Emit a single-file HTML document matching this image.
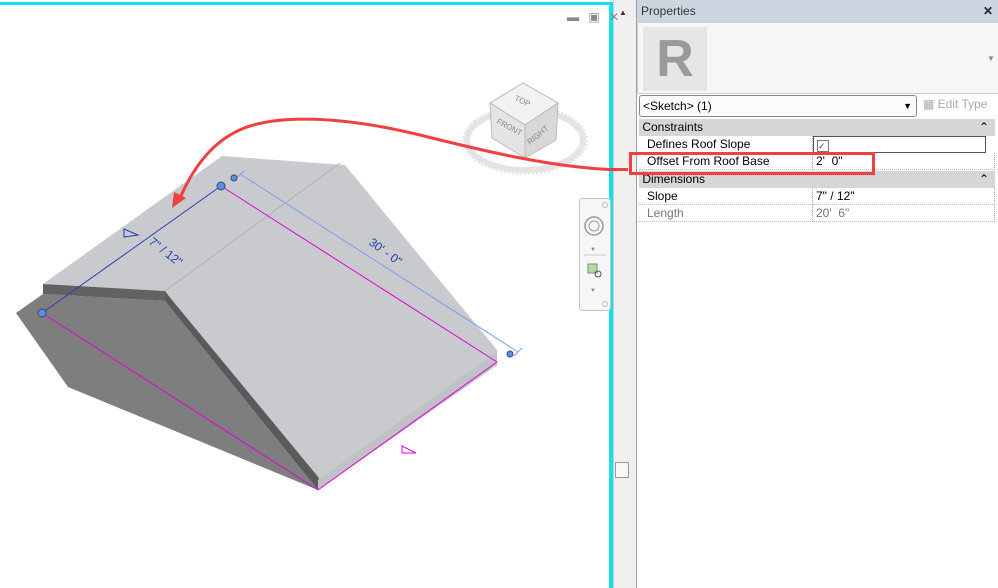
<!DOCTYPE html>
<html><head><meta charset="utf-8"><style>
body{margin:0;width:998px;height:588px;overflow:hidden;background:#fff;font-family:"Liberation Sans",sans-serif;position:relative}
.abs{position:absolute}
.panel{left:636px;top:0;width:362px;height:588px;background:#fff;border-left:1px solid #a0a0a0}
.title{left:0;top:0;width:362px;height:22px;background:#ccd6e1;font-size:12px;color:#333;line-height:22px;text-indent:4px}
.row{position:absolute;left:2px;width:356px;font-size:12px;color:#000;line-height:17px}
.hdr{background:#d6d6d6}
.cell{position:absolute;top:0;height:100%;border-right:1px dotted #aaa;border-bottom:1px dotted #bbb;box-sizing:border-box}
</style></head><body>
<div class="abs" style="left:0;top:2px;width:612px;height:3px;background:#12e0ee"></div>
<div class="abs" style="left:609px;top:2px;width:4px;height:586px;background:#12e0ee"></div>
<div class="abs" style="left:613px;top:0;width:22px;height:588px;background:#f0f0f0;border-left:1px solid #ccc"></div>
<div class="abs" style="left:619px;top:8px;font-size:8px;color:#333">▲</div>
<div class="abs" style="left:615px;top:462px;width:12px;height:14px;background:#f8f8f8;border:1px solid #999"></div>
<div class="abs" style="left:567px;top:10px;font-size:12px;color:#888;letter-spacing:3px">▬ ▣ ✕</div>

<svg class="abs" style="left:0;top:0" width="613" height="588">
 <polygon points="43,284 222,156 345,165 497,350 497,365 318,490 165,291" fill="#c8cacd"/>
 <line x1="165" y1="291" x2="340" y2="163" stroke="#a5a7aa" stroke-width="0.7"/>
 <polygon points="16,313 43,294 165,301 318,490 68,387" fill="#7e7e7e"/>
 <polygon points="43,284 165,291 165,301 43,294" fill="#626264"/>
 <polygon points="165,291 172,300 319,478 318,490 165,301" fill="#5a5a5c"/>
 <polygon points="318,480 497,352 497,365 318,490" fill="#bfc1c4"/>
 <line x1="42" y1="313" x2="318" y2="490" stroke="#e000e0" stroke-width="1"/>
 <line x1="221" y1="186" x2="497" y2="362" stroke="#e000e0" stroke-width="1"/>
 <line x1="318" y1="490" x2="497" y2="362" stroke="#e000e0" stroke-width="1"/>
 <line x1="42" y1="313" x2="221" y2="186" stroke="#1d3fb8" stroke-width="1"/>
 <line x1="240" y1="174" x2="518" y2="352" stroke="#7aa2ee" stroke-width="1"/>
 <line x1="236" y1="178" x2="244" y2="171" stroke="#7aa2ee"/>
 <line x1="514" y1="356" x2="522" y2="348" stroke="#7aa2ee"/>
 <circle cx="42" cy="313" r="4" fill="#5b8ee0" stroke="#3a4a70"/>
 <circle cx="221" cy="186" r="4" fill="#5b8ee0" stroke="#3a4a70"/>
 <circle cx="234" cy="178" r="3" fill="#5b8ee0" stroke="#3a4a70"/>
 <circle cx="510" cy="354" r="3" fill="#5b8ee0" stroke="#3a4a70"/>
 <polygon points="124,229 124,237 138,235" fill="none" stroke="#1d3fb8"/>
 <polygon points="402,446 402,453 416,453" fill="none" stroke="#e000e0"/>
 <text transform="translate(148,243) rotate(38)" font-size="12" fill="#1d3fb8">7" / 12"</text>
 <text transform="translate(368,244) rotate(36)" font-size="12" fill="#1d3fb8">30' - 0"</text>
 <ellipse cx="525" cy="140" rx="58" ry="30" fill="none" stroke="#e4e4e4" stroke-width="6"/>
 <ellipse cx="525" cy="140" rx="62" ry="34" fill="none" stroke="#d6d6d6" stroke-width="1" stroke-dasharray="2 2"/>
 <polygon points="490,103 523,83 558,103 525,125" fill="#f2f2f2" stroke="#bbb"/>
 <polygon points="490,103 525,125 525,158 492,138" fill="#e4e4e4" stroke="#bbb"/>
 <polygon points="525,125 558,103 556,140 525,158" fill="#d8d8d8" stroke="#bbb"/>
 <text transform="translate(514,100) rotate(25)" font-size="8" fill="#888">TOP</text>
 <text transform="translate(496,123) rotate(28)" font-size="8" fill="#888">FRONT</text>
 <text transform="translate(530,145) rotate(-40)" font-size="8" fill="#888">RIGHT</text>
 <rect x="579.5" y="198.5" width="31" height="112" rx="3" fill="#f6f6f6" stroke="#c4c4c4"/>
 <circle cx="605" cy="205" r="2.5" fill="none" stroke="#bbb"/>
 <circle cx="605" cy="304" r="2.5" fill="none" stroke="#bbb"/>
 <circle cx="594" cy="226" r="9" fill="none" stroke="#999" stroke-width="1.5"/>
 <circle cx="594" cy="226" r="5" fill="none" stroke="#999"/>
 <text x="590" y="251" font-size="6" fill="#888">▼</text>
 <line x1="584" y1="255" x2="606" y2="255" stroke="#ccc"/>
 <rect x="588" y="264" width="9" height="9" fill="#b8d8a8" stroke="#6a9a5a"/>
 <circle cx="598" cy="274" r="3" fill="none" stroke="#555"/>
 <text x="590" y="292" font-size="6" fill="#888">▼</text>
 <path d="M628,170 C560,170 480,150 420,135 C350,118 270,110 230,135 C205,150 190,175 180,198" fill="none" stroke="#f04040" stroke-width="3"/>
 <polygon points="172,208 174,192 186,198" fill="#f04040"/>
</svg>
<div class="abs" style="left:612px;top:168px;width:16px;height:3px;background:#f04040"></div>

<div class="abs panel">
 <div class="abs title">Properties<span style="position:absolute;right:6px;top:0;font-weight:bold;color:#222">✕</span></div>
 <div class="abs" style="left:0;top:22px;width:360px;height:70px;background:#f6f6f6;border:1px solid #ccc"></div>
 <div class="abs" style="left:6px;top:27px;width:64px;height:64px;background:#e6e6e6"><div style="font:bold 52px 'Liberation Sans';color:#9a9a9a;text-align:center;line-height:64px">R</div></div>
 <div class="abs" style="left:350px;top:54px;font-size:8px;color:#888">▼</div>
 <div class="abs" style="left:2px;top:95px;width:276px;height:20px;border:1px solid #888;border-radius:3px;background:#fbfbfb;font-size:12px;line-height:20px;text-indent:3px">&lt;Sketch&gt; (1)<span style="position:absolute;right:4px;font-size:9px">▼</span></div>
 <div class="abs" style="left:286px;top:97px;font-size:12px;color:#aaa">▦ Edit Type</div>
 <div class="row hdr" style="top:119px">&nbsp;Constraints<span style="position:absolute;right:6px">⌃</span></div>
 <div class="row" style="top:136px;height:17px"><div class="cell" style="left:0;width:174px;padding-left:8px">Defines Roof Slope</div><div class="cell" style="left:174px;width:173px;border:1px solid #555"><span style="display:inline-block;width:10px;height:10px;border:1px solid #777;margin:3px;font-size:9px;line-height:10px;color:#34c">✓</span></div></div>
 <div class="row" style="top:153px;height:17px"><div class="cell" style="left:0;width:174px;padding-left:8px">Offset From Roof Base</div><div class="cell" style="left:174px;width:182px;padding-left:3px">2'&nbsp; 0"</div></div>
 <div class="row hdr" style="top:171px">&nbsp;Dimensions<span style="position:absolute;right:6px">⌃</span></div>
 <div class="row" style="top:188px;height:17px"><div class="cell" style="left:0;width:174px;padding-left:8px">Slope</div><div class="cell" style="left:174px;width:182px;padding-left:3px">7" / 12"</div></div>
 <div class="row" style="top:205px;height:17px;color:#777"><div class="cell" style="left:0;width:174px;padding-left:8px">Length</div><div class="cell" style="left:174px;width:182px;padding-left:3px">20'&nbsp; 6"</div></div>
 <div class="abs" style="left:-8px;top:152px;width:240px;height:17px;border:3px solid #f04040"></div>
</div>
</body></html>
